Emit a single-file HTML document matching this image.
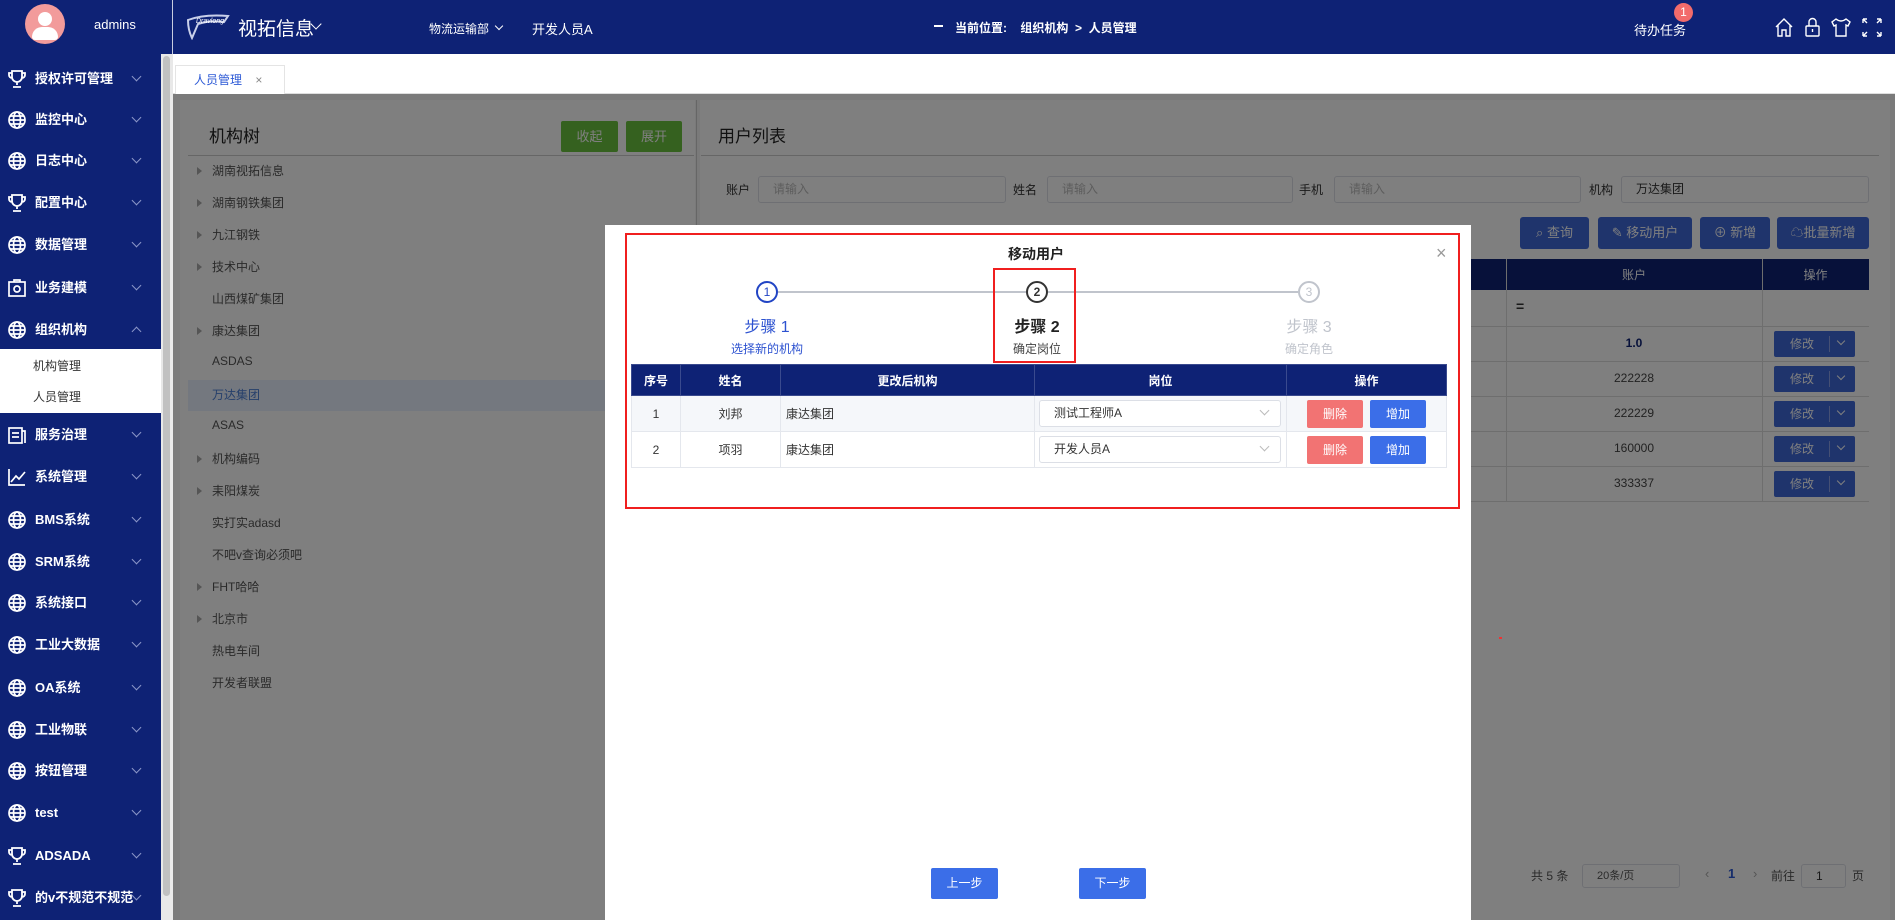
<!DOCTYPE html>
<html><head><meta charset="utf-8"><style>
*{margin:0;padding:0;box-sizing:border-box}
body{width:1895px;height:920px;overflow:hidden;position:relative;background:#fff;font-family:"Liberation Sans","Noto Sans CJK SC",sans-serif;font-size:13px;color:#333}
.a{position:absolute}
.hdr{left:0;top:0;width:1895px;height:54px;background:#0e2275;color:#fff}
.side{left:0;top:54px;width:161px;height:866px;background:#0e2275;color:#fff}
.mi{position:absolute;left:0;width:161px;height:40px;font-size:13px;font-weight:bold;line-height:40px;color:#fff}
.mi svg{position:absolute;left:7px;top:10px}
.mi span{position:absolute;left:35px}
.mi i{position:absolute;left:133px;top:14px;width:7px;height:7px;border-right:1px solid #8b96c8;border-bottom:1px solid #8b96c8;transform:rotate(45deg)}
.tree{position:absolute;left:212px;font-size:12px;color:#555}
.tri{position:absolute;left:197px;width:0;height:0;border-left:5px solid #aaa;border-top:4px solid transparent;border-bottom:4px solid transparent}
.inp{position:absolute;height:27px;border:1px solid #dcdfe6;border-radius:3px;background:#fff;color:#bbb;font-size:12px;line-height:25px;padding-left:14px}
.btn{position:absolute;height:32px;background:#3f68d8;color:#fff;font-size:13px;line-height:32px;text-align:center;border-radius:3px}
.td{position:absolute;text-align:center;font-size:12px;color:#444}
.mt td,.mt th{border:1px solid #e4e7ed;font-size:12px;text-align:center}
</style></head><body>

<div class="a hdr">
  <div class="a" style="left:25px;top:4px;width:40px;height:40px;border-radius:50%;background:#f29b9b"></div>
  <div class="a" style="left:38px;top:12px;width:14px;height:14px;border-radius:50%;background:#fff"></div>
  <div class="a" style="left:32px;top:27px;width:26px;height:13px;border-radius:13px 13px 4px 4px;background:#fff"></div>
  <div class="a" style="left:94px;top:17px;font-size:13px">admins</div>
  <div class="a" style="left:172px;top:0;width:1px;height:54px;background:#c8cde0"></div>
  <svg class="a" style="left:184px;top:12px" width="48" height="28" viewBox="0 0 48 28"><path d="M4 8 Q20 2 44 4 L40 10 Q26 8 14 12 L8 26 Q4 18 4 8Z" fill="none" stroke="#c9d0ea" stroke-width="2"/><text x="12" y="11" font-size="7" fill="#fff" font-style="italic">Dravlong</text></svg>
  <div class="a" style="left:238px;top:14px;font-size:19px">视拓信息</div>
  <div class="a" style="left:312px;top:20px;width:8px;height:8px;border-right:1.5px solid #fff;border-bottom:1.5px solid #fff;transform:rotate(45deg)"></div>
  <div class="a" style="left:429px;top:20px;font-size:12px">物流运输部</div>
  <div class="a" style="left:496px;top:23px;width:6px;height:6px;border-right:1px solid #fff;border-bottom:1px solid #fff;transform:rotate(45deg)"></div>
  <div class="a" style="left:532px;top:19px;font-size:13px">开发人员A</div>
  <div class="a" style="left:934px;top:25px;width:9px;height:2px;background:#fff"></div>
  <div class="a" style="left:955px;top:19px;font-size:12px;font-weight:bold">当前位置:&nbsp;&nbsp;&nbsp; 组织机构 &nbsp;&gt;&nbsp; 人员管理</div>
  <div class="a" style="left:1634px;top:20px;font-size:13px">待办任务</div>
  <div class="a" style="left:1674px;top:3px;width:19px;height:19px;border-radius:50%;background:#f26b6b;color:#fff;font-size:12px;text-align:center;line-height:19px">1</div>
  <svg class="a" style="left:1774px;top:16px" width="110" height="22" viewBox="0 0 110 22" fill="none" stroke="#fff" stroke-width="1.4">
    <path d="M2 11 L10 3 L18 11 M4 9 V20 H8 V14 H12 V20 H16 V9"/>
    <rect x="32" y="10" width="13" height="10" rx="1"/><path d="M35 10 V6 a3.5 3.5 0 0 1 7 0 V10 M38.5 13 V16"/>
    <path d="M62 3 L58 6 L60 10 L62 9 V20 H72 V9 L74 10 L76 6 L72 3 Q67 7 62 3Z"/>
    <path d="M89 3 H93 M89 3 V7 M89 3 L93 7 M107 3 H103 M107 3 V7 M107 3 L103 7 M89 20 H93 M89 20 V16 M89 20 L93 16 M107 20 H103 M107 20 V16 M107 20 L103 16"/>
  </svg>
</div>

<div class="a side">
  <div class="a" style="left:0;top:295px;width:161px;height:64px;background:#fff"></div>
  <div class="a" style="left:33px;top:303px;color:#333;font-size:12px">机构管理</div>
  <div class="a" style="left:33px;top:334px;color:#333;font-size:12px">人员管理</div>
</div>
<div class="a" style="left:161px;top:54px;width:12px;height:866px;background:#e8e8e8"></div>
<div class="a" style="left:163px;top:56px;width:7px;height:840px;background:#c1c1c1;border-radius:4px"></div>

<div id="menu"></div>

<div class="a" style="left:173px;top:54px;width:1722px;height:40px;background:#fff;border-bottom:1px solid #ddd"></div>
<div class="a" style="left:175px;top:65px;width:110px;height:30px;background:#fff;border:1px solid #e4e4e4;border-bottom:none;font-size:12px;color:#2d5ad6;line-height:28px;padding-left:18px">人员管理 <span style="color:#888;margin-left:10px">×</span></div>

<div class="a" style="left:173px;top:94px;width:1722px;height:826px;background:#f5f5f5"></div>
<div class="a" style="left:180px;top:100px;width:515px;height:820px;background:#fff"></div>
<div class="a" style="left:700px;top:100px;width:1190px;height:820px;background:#fff"></div>
<div class="a" style="left:209px;top:122px;font-size:17px;color:#222">机构树</div>
<div class="a" style="left:561px;top:121px;width:57px;height:31px;background:#6ac23f;color:#fff;text-align:center;line-height:31px;border-radius:2px">收起</div>
<div class="a" style="left:626px;top:121px;width:56px;height:31px;background:#6ac23f;color:#fff;text-align:center;line-height:31px;border-radius:2px">展开</div>
<div class="a" style="left:188px;top:155px;width:506px;height:1px;background:#ccc"></div>
<div class="a" style="left:188px;top:380px;width:506px;height:31px;background:#e8f0fe"></div>
<div id="tree"></div>

<div class="a" style="left:696px;top:100px;width:1px;height:820px;background:#ccc"></div>
<div class="a" style="left:718px;top:122px;font-size:17px;color:#222">用户列表</div>
<div class="a" style="left:701px;top:155px;width:1178px;height:1px;background:#ccc"></div>
<div class="a" style="left:726px;top:181px;font-size:12px">账户</div>
<div class="inp" style="left:758px;top:176px;width:248px">请输入</div>
<div class="a" style="left:1013px;top:181px;font-size:12px">姓名</div>
<div class="inp" style="left:1047px;top:176px;width:246px">请输入</div>
<div class="a" style="left:1299px;top:181px;font-size:12px">手机</div>
<div class="inp" style="left:1334px;top:176px;width:247px">请输入</div>
<div class="a" style="left:1589px;top:181px;font-size:12px">机构</div>
<div class="inp" style="left:1621px;top:176px;width:248px;color:#333">万达集团</div>
<div class="btn" style="left:1520px;top:217px;width:69px">⌕ 查询</div>
<div class="btn" style="left:1598px;top:217px;width:94px">✎ 移动用户</div>
<div class="btn" style="left:1700px;top:217px;width:70px">⊕ 新增</div>
<div class="btn" style="left:1777px;top:217px;width:92px">☁批量新增</div>
<div class="a" style="left:1460px;top:259px;width:409px;height:31px;background:#0e2275"></div>
<div class="a" style="left:1506px;top:259px;width:1px;height:242px;background:#ddd"></div>
<div class="a" style="left:1762px;top:259px;width:1px;height:242px;background:#ddd"></div>
<div class="td" style="left:1506px;top:266px;width:256px;color:#fff">账户</div>
<div class="td" style="left:1762px;top:266px;width:107px;color:#fff">操作</div>
<div class="a" style="left:1516px;top:298px;font-weight:bold;font-size:14px">=</div>
<div id="rows"></div>
<div class="a" style="left:1531px;top:867px;font-size:12px;color:#555">共 5 条</div>
<div class="inp" style="left:1582px;top:864px;width:98px;height:24px;line-height:22px;color:#555;font-size:11px">20条/页</div>
<div class="a" style="left:1705px;top:866px;color:#aaa">‹</div>
<div class="a" style="left:1728px;top:866px;color:#2d5ad6;font-weight:bold">1</div>
<div class="a" style="left:1753px;top:866px;color:#aaa">›</div>
<div class="a" style="left:1771px;top:867px;font-size:12px;color:#555">前往</div>
<div class="inp" style="left:1801px;top:864px;width:45px;height:24px;line-height:22px;color:#333">1</div>
<div class="a" style="left:1852px;top:867px;font-size:12px;color:#555">页</div>

<div class="a" style="left:173px;top:94px;width:1722px;height:826px;background:rgba(0,0,0,.5)"></div>
<div class="a" style="left:1499px;top:637px;width:3px;height:2px;background:#e33"></div>

<div class="a" style="left:605px;top:225px;width:866px;height:695px;background:#fff"></div>
<div class="a" style="left:625px;top:233px;width:835px;height:276px;border:2px solid #f01f1f"></div>
<div class="a" style="left:1008px;top:244px;font-size:14px;font-weight:bold;color:#222">移动用户</div>
<div class="a" style="left:1436px;top:243px;font-size:18px;color:#999">×</div>
<div class="a" style="left:778px;top:291px;width:248px;height:2px;background:#c0c4cc"></div>
<div class="a" style="left:1048px;top:291px;width:250px;height:2px;background:#c0c4cc"></div>
<div class="a" style="left:756px;top:281px;width:22px;height:22px;border:2px solid #2144c4;border-radius:50%;color:#2144c4;font-size:12px;text-align:center;line-height:18px;background:#fff">1</div>
<div class="a" style="left:1026px;top:281px;width:22px;height:22px;border:2px solid #333;border-radius:50%;color:#333;font-size:12px;text-align:center;line-height:18px;background:#fff;font-weight:bold">2</div>
<div class="a" style="left:1298px;top:281px;width:22px;height:22px;border:2px solid #c0c4cc;border-radius:50%;color:#c0c4cc;font-size:12px;text-align:center;line-height:18px;background:#fff">3</div>
<div class="a" style="left:717px;top:313px;width:100px;text-align:center;font-size:16px;color:#2d52d0">步骤 1</div>
<div class="a" style="left:717px;top:340px;width:100px;text-align:center;font-size:12px;color:#2d52d0">选择新的机构</div>
<div class="a" style="left:987px;top:313px;width:100px;text-align:center;font-size:16px;color:#222;font-weight:bold">步骤 2</div>
<div class="a" style="left:987px;top:340px;width:100px;text-align:center;font-size:12px;color:#444">确定岗位</div>
<div class="a" style="left:1259px;top:313px;width:100px;text-align:center;font-size:16px;color:#c0c4cc">步骤 3</div>
<div class="a" style="left:1259px;top:340px;width:100px;text-align:center;font-size:12px;color:#c0c4cc">确定角色</div>
<div class="a" style="left:993px;top:268px;width:83px;height:95px;border:2px solid #f01f1f"></div>

<table class="a mt" style="left:631px;top:364px;width:815px;border-collapse:collapse;table-layout:fixed">
<colgroup><col style="width:49px"><col style="width:100px"><col style="width:254px"><col style="width:252px"><col style="width:160px"></colgroup>
<tr style="height:31px;background:#0e2275;color:#fff"><th style="border-color:#3a4a8e">序号</th><th style="border-color:#3a4a8e">姓名</th><th style="border-color:#3a4a8e">更改后机构</th><th style="border-color:#3a4a8e">岗位</th><th style="border-color:#3a4a8e">操作</th></tr>
<tr style="height:36px;background:#f5f7fa"><td>1</td><td>刘邦</td><td style="text-align:left;padding-left:5px">康达集团</td><td style="position:relative"><div class="inp" style="left:4px;top:4px;width:242px;color:#333;text-align:left">测试工程师A<span style="position:absolute;right:12px;top:6px;width:7px;height:7px;border-right:1px solid #bbb;border-bottom:1px solid #bbb;transform:rotate(45deg)"></span></div></td><td style="position:relative"><div class="a" style="left:20px;top:4px;width:56px;height:28px;background:#f27373;color:#fff;line-height:28px;border-radius:2px">删除</div><div class="a" style="left:83px;top:4px;width:56px;height:28px;background:#3b6ee8;color:#fff;line-height:28px;border-radius:2px">增加</div></td></tr>
<tr style="height:36px;background:#fff"><td>2</td><td>项羽</td><td style="text-align:left;padding-left:5px">康达集团</td><td style="position:relative"><div class="inp" style="left:4px;top:4px;width:242px;color:#333;text-align:left">开发人员A<span style="position:absolute;right:12px;top:6px;width:7px;height:7px;border-right:1px solid #bbb;border-bottom:1px solid #bbb;transform:rotate(45deg)"></span></div></td><td style="position:relative"><div class="a" style="left:20px;top:4px;width:56px;height:28px;background:#f27373;color:#fff;line-height:28px;border-radius:2px">删除</div><div class="a" style="left:83px;top:4px;width:56px;height:28px;background:#3b6ee8;color:#fff;line-height:28px;border-radius:2px">增加</div></td></tr>
</table>

<div class="a" style="left:931px;top:868px;width:67px;height:31px;background:#3b6ee8;color:#fff;text-align:center;line-height:31px;border-radius:2px;font-size:12px">上一步</div>
<div class="a" style="left:1079px;top:868px;width:67px;height:31px;background:#3b6ee8;color:#fff;text-align:center;line-height:31px;border-radius:2px;font-size:12px">下一步</div>

<script>
var trophy='<svg width="20" height="20" viewBox="0 0 20 20" fill="none" stroke="#fff" stroke-width="1.8"><path d="M5 2 H15 V8 a5 5 0 0 1 -10 0Z M5 4 H2 V6 a3 3 0 0 0 3 3 M15 4 H18 V6 a3 3 0 0 1 -3 3 M10 13 V16 M6 18 H14"/></svg>';
var globe='<svg width="20" height="20" viewBox="0 0 20 20" fill="none" stroke="#fff" stroke-width="1.7"><circle cx="10" cy="10" r="8"/><ellipse cx="10" cy="10" rx="3.5" ry="8"/><path d="M2 10 H18 M3.5 6 H16.5 M3.5 14 H16.5"/></svg>';
var box='<svg width="20" height="20" viewBox="0 0 20 20" fill="none" stroke="#fff" stroke-width="1.7"><rect x="2" y="4" width="16" height="14"/><path d="M7 4 V2 H13 V4"/><circle cx="10" cy="11" r="3"/></svg>';
var chart='<svg width="20" height="20" viewBox="0 0 20 20" fill="none" stroke="#fff" stroke-width="1.7"><path d="M2 2 V18 H18 M4 15 L9 9 L12 12 L18 5"/></svg>';
var srv='<svg width="20" height="20" viewBox="0 0 20 20" fill="none" stroke="#fff" stroke-width="1.7"><rect x="2" y="3" width="13" height="15"/><path d="M15 6 H18 V18 M5 8 H12 M5 12 H12"/></svg>';
var m=[[79,trophy,'授权许可管理'],[120,globe,'监控中心'],[161,globe,'日志中心'],[203,trophy,'配置中心'],[245,globe,'数据管理'],[288,box,'业务建模'],[330,globe,'组织机构',1],[435,srv,'服务治理'],[477,chart,'系统管理'],[520,globe,'BMS系统'],[562,globe,'SRM系统'],[603,globe,'系统接口'],[645,globe,'工业大数据'],[688,globe,'OA系统'],[730,globe,'工业物联'],[771,globe,'按钮管理'],[813,globe,'test'],[856,trophy,'ADSADA'],[898,trophy,'的v不规范不规范']];
var h='';m.forEach(function(x){h+='<div class="mi" style="top:'+(x[0]-20)+'px">'+x[1]+'<span>'+x[2]+'</span><i'+(x[3]?' style="transform:rotate(225deg);top:18px"':'')+'></i></div>';});
document.getElementById('menu').innerHTML=h;
var t=[['湖南视拓信息',1],['湖南钢铁集团',1],['九江钢铁',1],['技术中心',1],['山西煤矿集团',0],['康达集团',1],['ASDAS',0],['万达集团',0],['ASAS',0],['机构编码',1],['耒阳煤炭',1],['实打实adasd',0],['不吧v查询必须吧',0],['FHT哈哈',1],['北京市',1],['热电车间',0],['开发者联盟',0]];
h='';t.forEach(function(x,i){var y=162+i*32;h+=(x[1]?'<div class="tri" style="top:'+(y+5)+'px"></div>':'')+'<div class="tree" style="top:'+y+'px'+(i==7?';color:#4a7fd6':'')+'">'+x[0]+'</div>';});
document.getElementById('tree').innerHTML=h;
var r=['1.0','222228','222229','160000','333337'];
h='<div class="a" style="left:1460px;top:326px;width:409px;height:1px;background:#ddd"></div>';
r.forEach(function(v,i){var y=326+i*35;h+='<div class="a" style="left:1460px;top:'+(y+35)+'px;width:409px;height:1px;background:#ddd"></div><div class="td" style="left:1506px;top:'+(y+10)+'px;width:256px'+(i==0?';font-weight:bold;color:#0e2275':'')+'">'+v+'</div><div class="a" style="left:1774px;top:'+(y+5)+'px;width:81px;height:26px;background:#3f68d8;border-radius:2px;color:#fff;font-size:12px;line-height:26px;padding-left:16px">修改<span style="position:absolute;left:55px;top:5px;width:1px;height:16px;background:#8aa0e8"></span><span style="position:absolute;left:64px;top:7px;width:6px;height:6px;border-right:1px solid #fff;border-bottom:1px solid #fff;transform:rotate(45deg)"></span></div>';});
document.getElementById('rows').innerHTML=h;
</script>
</body></html>
